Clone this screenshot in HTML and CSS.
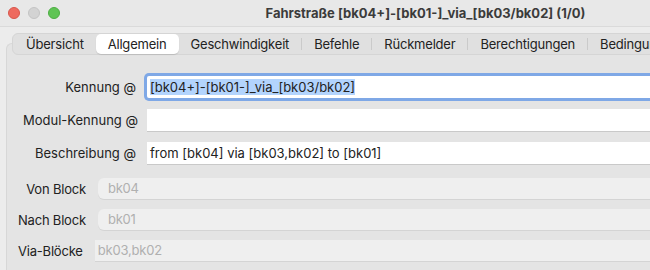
FILE: index.html
```html
<!DOCTYPE html>
<html lang="de">
<head>
  <meta charset="UTF-8" />
  <meta name="viewport" content="width=device-width, initial-scale=1" />
  <title>Fahrstraße</title>
  <link rel="stylesheet" href="styles.css">
</head>
<body>

  <div class="window">
    <header class="titlebar">
      <div class="lights">
        <span class="light red"></span>
        <span class="light idle"></span>
        <span class="light green"></span>
      </div>
      <div class="title">Fahrstraße [bk04+]-[bk01-]_via_[bk03/bk02] (1/0)</div>
      <div></div>
    </header>

    <div class="content">
      <nav class="tabs">
        <span class="tab">Übersicht</span>
        <span class="tab active">Allgemein</span>
        <span class="tab">Geschwindigkeit</span>
        <span class="sep"></span>
        <span class="tab">Befehle</span>
        <span class="sep"></span>
        <span class="tab">Rückmelder</span>
        <span class="sep"></span>
        <span class="tab">Berechtigungen</span>
        <span class="sep"></span>
        <span class="tab">Bedingungen</span>
        <span class="sep"></span>
        <span class="tab">Aktionen</span>
      </nav>

      <section class="panel">
        <div class="form">
          <label class="label">Kennung @</label>
          <div class="field focus"><span class="selected">[bk04+]-[bk01-]_via_[bk03/bk02]</span></div>

          <label class="label">Modul-Kennung @</label>
          <div class="field"></div>

          <label class="label">Beschreibung @</label>
          <div class="field">from [bk04] via [bk03,bk02] to [bk01]</div>
        </div>

        <div class="blocks">
          <div class="block-grid">
            <span class="label">Von Block</span>
            <div class="combo">bk04</div>
            <span class="label">Nach Block</span>
            <div class="combo">bk01</div>
          </div>
          <div class="block-row">
            <span class="label">Via-Blöcke</span>
            <div class="readonly">bk03,bk02</div>
          </div>
        </div>
      </section>
    </div>
  </div>

</body>
</html>
```

FILE: styles.css
```css
* {
  box-sizing: border-box;
}

html,
body {
  margin: 0;
  overflow: hidden;
}

body {
  font-family: Inter, 'Noto Sans', sans-serif;
  font-size: 13px;
  color: #222;
  background: #ececec;
}

.window {
  width: 851px;
  height: 270px;
  background: #ececec;
}

/* Titelleiste */
.titlebar {
  height: 27px;
  display: grid;
  grid-template-columns: 1fr auto 1fr;
  align-items: center;
  background: #e8e8e8;
  border-bottom: 1px solid #dadada;
}

.lights {
  display: flex;
  gap: 8px;
  padding-left: 8px;
}

.light {
  width: 12px;
  height: 12px;
  border-radius: 50%;
}
.light.red {
  background: #ee6a5f;
  border: 1px solid #d8564b;
}
.light.idle {
  background: #d3d3d3;
  border: 1px solid #c4c4c4;
}
.light.green {
  background: #5fc454;
  border: 1px solid #4cae42;
}

.title {
  font-weight: 700;
  color: #3b3b3b;
  white-space: nowrap;
}

/* Reiter */
.content {
  padding: 6px 0 0 6px;
}

.tabs {
  position: relative;
  z-index: 1;
  display: flex;
  align-items: center;
  height: 22px;
  margin-left: 6px;
  margin-bottom: -12px;
  padding: 0 1px;
  background: #e0e0e0;
  border: 1px solid #d5d5d5;
  border-radius: 6px;
  white-space: nowrap;
  letter-spacing: -0.2px;
}

.tab {
  padding: 0 12px;
  line-height: 20px;
  color: #222;
}
.tab.active {
  background: #fff;
  border-radius: 5px;
  box-shadow: 0 1px 1px rgba(0, 0, 0, 0.12);
}

.sep {
  width: 1px;
  height: 12px;
  background: #cacaca;
}

/* Inhalt */
.panel {
  height: 240px;
  padding: 32px 0 0 16px;
  background: #e4e4e4;
  border: 1px solid #d7d7d7;
  border-right: none;
  border-radius: 6px 0 0 0;
}

.form {
  display: grid;
  grid-template-columns: 113px 1fr;
  column-gap: 11px;
  row-gap: 11px;
  align-items: center;
}

.label {
  text-align: right;
  white-space: nowrap;
}

.field {
  height: 22px;
  padding: 0 3px;
  line-height: 22px;
  background: #fff;
  box-shadow: 0 1px 0 #c9c9c9;
  white-space: nowrap;
}
.field.focus {
  border-radius: 2px;
  box-shadow: 0 0 0 3px #7fa8e6;
}

.selected {
  background: #b3d4fd;
}

.blocks {
  margin-top: 14px;
  margin-left: -5px;
  display: flex;
  flex-direction: column;
  gap: 10px;
  letter-spacing: -0.2px;
}

.block-grid {
  display: grid;
  grid-template-columns: auto 1fr;
  column-gap: 12px;
  row-gap: 10px;
  align-items: center;
}

.block-row {
  display: flex;
  align-items: center;
  gap: 12px;
}

.combo,
.readonly {
  height: 21px;
  line-height: 21px;
  background: #efefef;
  color: #b0b0b0;
  box-shadow: 0 1px 0 #d4d4d4;
}

.combo {
  padding: 0 10px;
  border-radius: 6px;
}

.readonly {
  flex: 1;
  padding: 0 3px;
}
```
